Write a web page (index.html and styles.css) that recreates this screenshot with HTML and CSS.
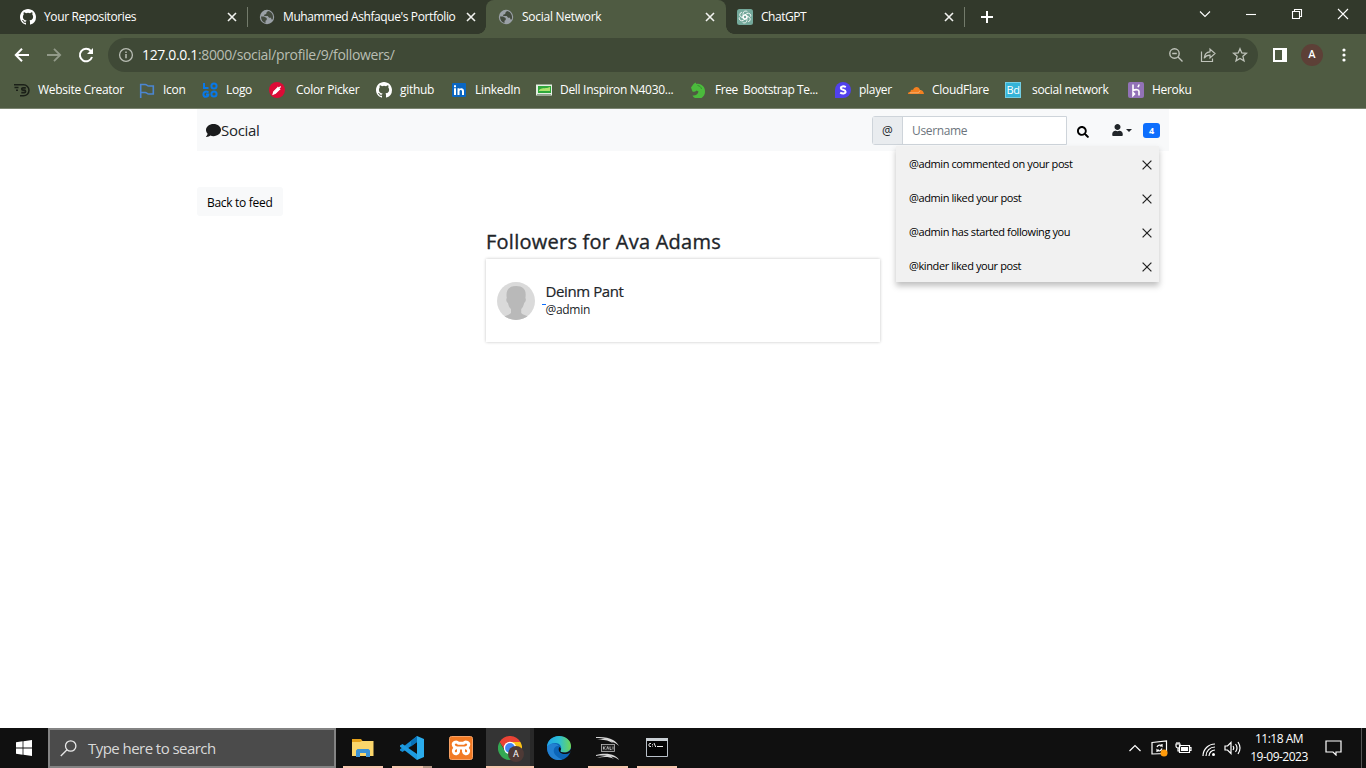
FILE: index.html
```html
<!DOCTYPE html>
<html lang="en">
<head>
<meta charset="utf-8">
<title>Social Network</title>
<link rel="stylesheet" href="styles.css">
</head>
<body>
<svg width="0" height="0" class="defs">
  <symbol id="github" viewBox="0 0 16 16"><path fill="#fff" d="M8 0C3.58 0 0 3.58 0 8c0 3.54 2.29 6.53 5.47 7.59.4.07.55-.17.55-.38 0-.19-.01-.82-.01-1.49-2.01.37-2.53-.49-2.69-.94-.09-.23-.48-.94-.82-1.13-.28-.15-.68-.52-.01-.53.63-.01 1.08.58 1.23.82.72 1.21 1.87.87 2.33.66.07-.52.28-.87.51-1.07-1.78-.2-3.64-.89-3.64-3.95 0-.87.31-1.59.82-2.15-.08-.2-.36-1.02.08-2.12 0 0 .67-.21 2.2.82a7.6 7.6 0 0 1 4 0c1.53-1.04 2.2-.82 2.2-.82.44 1.1.16 1.92.08 2.12.51.56.82 1.27.82 2.15 0 3.07-1.87 3.75-3.65 3.95.29.25.54.73.54 1.48 0 1.07-.01 1.93-.01 2.2 0 .21.15.46.55.38A8 8 0 0 0 16 8c0-4.42-3.58-8-8-8z"/></symbol>
  <symbol id="globe" viewBox="0 0 16 16"><circle cx="8" cy="8" r="7.200" fill="#9aa0a6"/><path fill="#434a3e" d="M2 7.500h3l2.700 1.500v2l-1.200.8v2.300C4 13.500 2 11 2 7.500zM9 2l-1.500 1.500-.3 1.500-2 .7v1.400h3.500l1.400 1.600h2.100v1.600l1.500.3C15 6 12.500 2.500 9 2z"/></symbol>
  <symbol id="close" viewBox="0 0 16 16"><path d="M4 4l8 8M12 4l-8 8" stroke="currentColor" stroke-width="1.6" fill="none"/></symbol>
  <symbol id="thin-x" viewBox="0 0 10 10"><path d="M.6.600l8.800 8.800M9.400.600.600 9.400" stroke="currentColor" stroke-width="1.250" fill="none"/></symbol>
</svg>
<header class="browser">
  <div class="tabs">
    <div class="tab tab-first"><svg class="fav"><use href="#github"/></svg><span class="title">Your Repositories</span><svg class="tab-x"><use href="#close"/></svg></div>
    <div class="tab tab-portfolio"><svg class="fav"><use href="#globe"/></svg><span class="title">Muhammed Ashfaque's Portfolio</span><svg class="tab-x"><use href="#close"/></svg></div>
    <div class="tab active"><svg class="fav"><use href="#globe"/></svg><span class="title">Social Network</span><svg class="tab-x"><use href="#close"/></svg></div>
    <div class="tab tab-chat"><svg class="fav" viewBox="0 0 16 16"><rect width="16" height="16" rx="2.500" fill="#74a99b"/><g fill="none" stroke="#fff" stroke-width=".8"><path id="petal" d="M8 5.800 6.100 6.900V4.500a2.500 2.500 0 0 1 4.400-1.600M6.100 6.900v2.200L8 10.200"/><use href="#petal" transform="rotate(60 8 8)"/><use href="#petal" transform="rotate(120 8 8)"/><use href="#petal" transform="rotate(180 8 8)"/><use href="#petal" transform="rotate(240 8 8)"/><use href="#petal" transform="rotate(300 8 8)"/></g></svg><span class="title">ChatGPT</span><svg class="tab-x"><use href="#close"/></svg></div>
    <svg class="new-tab" viewBox="0 0 12 12"><path d="M6 0v12M0 6h12" stroke="#fff" stroke-width="2"/></svg>
    <div class="window-controls">
      <svg width="12" height="12" viewBox="0 0 12 12"><path d="M1 3.500l5 5 5-5"/></svg>
      <svg width="12" height="12" viewBox="0 0 12 12"><path d="M1 6.500h10"/></svg>
      <svg width="12" height="12" viewBox="0 0 12 12"><path d="M1.500 3.500h7v7h-7zM3.500 3.500v-2h7v7h-2"/></svg>
      <svg width="12" height="12" viewBox="0 0 12 12"><path d="M1 1l10 10M11 1 1 11"/></svg>
    </div>
  </div>
  <div class="toolbar">
    <svg class="nav-icon" viewBox="0 0 16 16"><path d="M15 8H2M8 1.800 1.800 8 8 14.200" stroke="#fff" stroke-width="2" fill="none"/></svg>
    <svg class="nav-icon" viewBox="0 0 16 16"><path d="M1 8h13M8 1.800 14.200 8 8 14.200" stroke="#929a89" stroke-width="1.800" fill="none"/></svg>
    <svg class="nav-icon" viewBox="0 0 16 16"><path d="M14 10A6.200 6.200 0 1 1 12.800 4" stroke="#fff" stroke-width="2" fill="none"/><path d="M15 1v6H9z" fill="#fff"/></svg>
    <div class="omnibox">
      <svg width="16" height="16" viewBox="0 0 16 16"><circle cx="8" cy="8" r="6.400" fill="none" stroke="#b9bdb4" stroke-width="1.300"/><path d="M8 7v4.300M8 4.400v1.500" stroke="#b9bdb4" stroke-width="1.500"/></svg>
      <span class="url"><b>127.0.0.1</b>:8000/social/profile/9/followers/</span>
      <div class="omni-actions">
        <svg width="16" height="16" viewBox="0 0 16 16"><g fill="none" stroke="#bfc3ba" stroke-width="1.400"><circle cx="6.500" cy="6.500" r="4.700"/><path d="M4.200 6.500h4.600M10 10l4.500 4.500"/></g></svg>
        <svg width="16" height="16" viewBox="0 0 16 16"><g fill="none" stroke="#bfc3ba" stroke-width="1.200"><path d="M1.500 4.500v10h11v-3"/><path d="M4.200 11.200C4.500 7.500 6.500 5 10 4.800V2l5 4.500-5 4.500V8.200C7.500 8.200 5.600 9 4.200 11.200z"/></g></svg>
        <svg width="16" height="16" viewBox="0 0 16 16"><path fill="none" stroke="#bfc3ba" stroke-width="1.300" d="M8 1.700l1.800 4.200 4.600.4-3.500 3 1.100 4.500L8 11.400l-4 2.400 1.100-4.500-3.500-3 4.600-.4z"/></svg>
      </div>
    </div>
    <svg class="side-panel" viewBox="0 0 14 14"><path fill="#fff" d="M0 0h14v14H0zM2 2v10h7V2z" fill-rule="evenodd"/></svg>
    <span class="profile">A</span>
    <svg class="dots" viewBox="0 0 4 14"><g fill="#fff"><circle cx="2" cy="2" r="1.600"/><circle cx="2" cy="7" r="1.600"/><circle cx="2" cy="12" r="1.600"/></g></svg>
  </div>
  <nav class="bookmarks">
    <a><svg viewBox="0 0 16 16"><g fill="none" stroke="#1b2018" stroke-width="1.500"><path d="M0 2.800h9.500a5.500 5.500 0 0 1 0 11H6M.5 5.500h4M2 8.200h2"/><path d="M11.800 5.800H9a1.200 1.200 0 0 0 0 2.400h1.300a1.200 1.200 0 0 1 0 2.500H7.300" stroke-width="1.700"/></g></svg><span>Website Creator</span></a>
    <a><svg viewBox="0 0 16 16"><path d="M1.700 16V2.500h4.500c1.800 0 1.800 1.500 3.500 1.500h4.600v8h-4.600c-1.700 0-1.700-1.500-3.500-1.500H1.700" fill="none" stroke="#4b86d2" stroke-width="1.600"/></svg><span>Icon</span></a>
    <a><svg viewBox="0 0 16 16"><g fill="none" stroke="#0878e8" stroke-width="2"><path d="M2 1v5h4.500"/><circle cx="12" cy="4" r="2.600"/><path d="M6.500 10.500C4 8.500 1.400 10 1.400 12.200c0 3.500 5 3.500 5 .3H4"/><circle cx="12" cy="12" r="2.600"/></g></svg><span>Logo</span></a>
    <a class="wide"><svg viewBox="0 0 16 16"><circle cx="8" cy="8" r="8" fill="#dc0b36"/><path d="M4 12.300l.7-2.600 4.200-4.200 1.700 1.700-4.200 4.200zM8.500 5l2.700 2.700M9.700 6.500l2-2" stroke="#fff" stroke-width="1.100" fill="#fff"/></svg><span>Color Picker</span></a>
    <a><svg><use href="#github"/></svg><span>github</span></a>
    <a><svg viewBox="0 0 16 16"><rect x="1" y="1" width="14" height="14" rx="1" fill="#0a66c2"/><path fill="#fff" d="M3 6.200h2V13H3zM3 3.200h2v2H3zM6.500 6.200h2v1c1-1.600 4.500-1.600 4.500 1.700V13h-2V9.500c0-2-2.500-2-2.500 0V13h-2z"/></svg><span>LinkedIn</span></a>
    <a><svg viewBox="0 0 16 16"><path fill="#e5eee2" d="M0 2.500h16v11H0z"/><path fill="#2fa83c" d="M2 4h13v7H2z"/><path fill="#aee26d" d="M3 8c4-3 7-1 11-3v4H3z"/><path fill="#94a292" d="M1 12h14v1H1z"/></svg><span>Dell Inspiron N4030...</span></a>
    <a><svg viewBox="0 0 16 16"><path fill="#4bbb3c" d="M0 5.500 2.500 2 4.500.500l1 1.500C10 1 14.500 5 14 10c0 2.500-1.500 4.500-3.500 6H4c-1.300-.6-2-1.500-2.500-2.500 3 .5 5.300-1 6-4L5.500 8.500C4.500 9.700 3 10 1.500 9.500z"/><path d="M6.500 3.500C9 4 10 5 10.500 7" fill="none" stroke="#35922f"/></svg><span>Free&nbsp; Bootstrap Te...</span></a>
    <a><svg viewBox="0 0 16 16"><path d="M0 16V8a8 8 0 1 1 8 8z" fill="#5141ed"/><path d="M10.800 5.100C8.600 3.800 5.800 4.300 5.800 6c0 2.300 4.800 1.300 4.800 3.800 0 2-3.300 2.100-5.400.8" stroke="#fff" stroke-width="2" fill="none"/></svg><span>player</span></a>
    <a><svg viewBox="0 0 16 16"><path fill="#f38020" d="M0 12c.1-1.500 1-2.300 2.500-2.300C2.500 8 3.800 7.500 5 8c1-3.800 6-4.500 7 0 2.300 0 3.500 1.400 4 4z"/><path d="M2 10.800h8.500l1.500-2.300" fill="none" stroke="#f9c18e" stroke-width=".7"/></svg><span>CloudFlare</span></a>
    <a class="wide"><span class="bd">Bd</span><span>social network</span></a>
    <a><svg viewBox="0 0 16 16"><rect width="16" height="16" rx="2" fill="#9272b7"/><path d="M5 2.500v6c3-1.500 6-1 6 1v4M5 10.500v3l1.500-1.500zM11 2.500c0 1-.5 2-1.300 2.500" fill="none" stroke="#fff" stroke-width="1.600"/></svg><span>Heroku</span></a>
  </nav>
</header>
<main class="page">
  <nav class="navbar">
    <a class="brand"><svg width="15" height="15" viewBox="0 0 512 512"><path fill="#1b1c1d" d="M256 32C114.600 32 0 125.100 0 240c0 49.600 21.400 95 57 130.700C44.500 421.100 2.700 466 2.200 466.500c-2.200 2.300-2.800 5.700-1.500 8.700S4.800 480 8 480c66.300 0 116-31.800 140.600-51.400 32.700 12.300 69 19.400 107.400 19.400 141.400 0 256-93.100 256-208S397.400 32 256 32z"/></svg><span>Social</span></a>
    <div class="nav-tools">
      <div class="search"><span class="at">@</span><span class="field">Username</span></div>
      <svg class="find" viewBox="0 0 512 512"><path d="M505 442.700L405.300 343c-4.500-4.500-10.600-7-17-7H372c27.600-35.300 44-79.700 44-128C416 93.100 322.900 0 208 0S0 93.100 0 208s93.100 208 208 208c48.300 0 92.700-16.400 128-44v16.300c0 6.400 2.500 12.500 7 17l99.700 99.700c9.400 9.400 24.600 9.400 33.900 0l28.300-28.300c9.400-9.400 9.400-24.600.1-34zM208 336c-70.700 0-128-57.200-128-128 0-70.700 57.200-128 128-128 70.700 0 128 57.200 128 128 0 70.700-57.200 128-128 128z"/></svg>
      <svg class="user" viewBox="0 0 448 512"><path fill="#212529" d="M224 256c70.700 0 128-57.300 128-128S294.700 0 224 0 96 57.300 96 128s57.300 128 128 128zm89.600 32h-16.700c-22.200 10.200-46.900 16-72.900 16s-50.600-5.800-72.900-16h-16.700C60.200 288 0 348.200 0 422.400V464c0 26.500 21.500 48 48 48h352c26.500 0 48-21.500 48-48v-41.600c0-74.200-60.200-134.400-134.400-134.400z"/></svg>
      <i class="caret"></i>
      <div class="notify"><span class="badge">4</span>
        <ul class="menu">
          <li><span>@admin commented on your post</span><svg><use href="#thin-x"/></svg></li>
          <li><span>@admin liked your post</span><svg><use href="#thin-x"/></svg></li>
          <li><span>@admin has started following you</span><svg><use href="#thin-x"/></svg></li>
          <li><span>@kinder liked your post</span><svg><use href="#thin-x"/></svg></li>
        </ul>
      </div>
    </div>
  </nav>
  <a class="back"><span>Back to feed</span></a>
  <section class="followers">
    <h1><span>Followers for Ava Adams</span></h1>
    <article class="card">
      <svg class="avatar" viewBox="0 0 38 38"><defs><clipPath id="round"><circle cx="19" cy="19" r="19"/></clipPath></defs><g clip-path="url(#round)"><path fill="#dadada" d="M0 0h38v38H0z"/><path fill="#b9b9b9" d="M19 4c6.500 0 9.700 3 9.700 8.500 0 1.500-.2 2.500-.3 3.500 1 1.500.2 4-1.200 5-.7 3-1.700 4.700-3 6v4c1.500 2 5 2.300 8 4L29 39H9l-3-4c3-1.700 6.500-2 8-4v-4c-1.500-1.300-2.500-3-3-6-1.500-1-2.300-3.500-1.200-5C8.500 8.500 11.500 4 19 4z"/></g></svg>
      <i class="link-mark"></i>
      <div class="person"><span class="name">Deinm Pant</span><span class="handle">@admin</span></div>
    </article>
  </section>
</main>
<footer class="taskbar">
  <div class="start"><svg width="16" height="16" viewBox="0 0 16 16"><path fill="#fff" d="M0 2.300 6.600 1.300v6.200H0zM7.400 1.200 16 0v7.500H7.400zM0 8.400h6.600v6.300L0 13.700zM7.400 8.400H16V16l-8.600-1.200z"/></svg></div>
  <div class="task-search"><svg width="17" height="17" viewBox="0 0 17 17"><g fill="none" stroke="#e8e8e8" stroke-width="1.300"><circle cx="10.700" cy="6" r="5.200"/><path d="M7 9.700.800 16"/></g></svg><span>Type here to search</span></div>
  <div class="apps">
    <div class="app open"><svg viewBox="0 0 24 24"><path fill="#e5a11a" d="M1 3h9l1.500 2H22v3H1z"/><path fill="#fbd66b" d="M1 6h8l2-1h11.500v15H1z"/><path fill="#3b92d5" d="M5 21v-6.500L6.500 13h11l1.500 1.500V21h-4v-4H9v4z"/></svg></div>
    <div class="app open split"><svg viewBox="0 0 24 24"><path fill="#168bd1" d="M17 0v6L2.500 16 0 14.500v-1.200z"/><path fill="#1e9be0" d="M17 24v-6L2.500 8 0 9.500v1.200z"/><path fill="#0871b8" d="M11 5.500 17 0v6l-6 4.500z"/><path fill="#2bacec" d="M17 0l7 3v18l-7 3z"/></svg></div>
    <div class="app"><svg viewBox="0 0 24 24"><rect x=".5" y=".5" width="23" height="23" rx="2" fill="#f27a24" stroke="#f7a164"/><g fill="none" stroke="#fff" stroke-width="3"><path d="M12 7.300H9.500C7 4.500 3.500 7 4.500 9.500c.4 1.300 1.500 2 2.500 2.300-2.500 1-3.200 3-2.200 4.800 1.200 2 4.200 1.500 4.700-1V12h5v3.600c.5 2.500 3.500 3 4.700 1 1-1.800.3-3.800-2.200-4.800 1-.3 2.100-1 2.500-2.300 1-2.500-2.500-5-5-2.200z"/></g></svg></div>
    <div class="app open current"><svg viewBox="0 0 24 24"><path fill="#e94335" d="M1.600 6A12 12 0 0 1 22.400 6H12l-5 8z"/><path fill="#fbc116" d="M12 6h10.400A12 12 0 0 1 12 24l5.200-9z"/><path fill="#34a853" d="M1.600 6A12 12 0 0 0 12 24l5.200-9H6.800z"/><circle cx="12" cy="12" r="6.200" fill="#fff"/><circle cx="12" cy="12" r="4.900" fill="#4285f4"/></svg><span class="chrome-user">A</span></div>
    <div class="app"><svg viewBox="0 0 24 24"><defs><linearGradient id="eg" x1="0" x2="1"><stop stop-color="#20a5e8"/><stop offset=".5" stop-color="#2cbfd5"/><stop offset="1" stop-color="#6fd654"/></linearGradient></defs><circle cx="12" cy="12" r="12" fill="#0c65b8"/><path fill="url(#eg)" d="M0 11C0 5 5 0 12 0s12 4.500 12 10c0 4-3 6.500-7 6.500-3.200 0-4-1-3.500-2 2-2.500 0-7.500-5-7.500-3.500 0-7 2-8.500 4z"/><path fill="#2380d1" d="M0 11c2-4 9-5 12-1-5-1-7 5-3.500 9 2 2.400 4 3.500 7 4.500C7 26 0 20 0 11z"/><path fill="#111" d="M12.500 11c-2 2-.5 7 5 7 2.300 0 4-.7 5.500-1.600l1.500-2V12c-2 4-5 4.500-7.500 4.500-3.200 0-4-1-3.500-2 .8-1.200.500-2.700-1-3.500z"/></svg></div>
    <div class="app open"><svg viewBox="0 0 24 24"><path d="M0 1c7-.5 13 .5 17 3 3 1.500 4.500 3.500 6 6-3-2.500-5-3.700-8-4.500 1 .7 2 1.300 2.500 2C12 4 7 3.500 1 4c4-1 7-1 9-.8C7 2.300 4 2 0 2zM0 19c7-2 14-1.500 18 .5 2.500 1.200 4 2.500 5 4.500-3-2.500-5-3-8-3.500L18 23c-5-2.500-10-2.500-17-1 4-1.500 7-2 10-2-4-.7-7-.5-11 0z" fill="#d7d7d7"/><rect x="5.500" y="8.500" width="13" height="7" fill="#202020" stroke="#bbb" stroke-width=".8"/><path d="M7.500 10.500v3M9.500 10.500l-2 1.500 2 1.500M10.700 13.500l1-3 1 3M14 10.500v3h1.500M17 10.500v3" fill="none" stroke="#ddd" stroke-width=".7"/></svg></div>
    <div class="app open"><svg viewBox="0 0 24 24"><path fill="#050505" stroke="#b9c1c9" stroke-width="1" d="M1.500 2.500h21v18h-21z"/><path fill="#cad0d5" d="M1 2h22v3H1z"/><path d="M6 7.500H4.500L4 8v2l.5.500H6M7.500 8v.8M7.500 9.700v.8M9 7l1.700 4M12 10.500h6" stroke="#eee" fill="none"/></svg></div>
  </div>
  <div class="tray">
    <svg class="up" viewBox="0 0 12 8"><path d="M.5 7 6 1.500 11.500 7"/></svg>
    <svg class="sync" viewBox="0 0 17 17"><path d="M1 2.500 15.500 1v12.500L1 14zM6 7a3 3 0 0 1 5-1V4M11 6H9M11 8.500a3 3 0 0 1-5 1.500v2M6 10h2"/><circle cx="13" cy="13" r="3.500" fill="#ff9b0b"/></svg>
    <svg class="battery" viewBox="0 0 17 12"><path d="M4.500 3.500h10v7h-10zM15 5.500h1v3h-1M1 2h4v2a2 2 0 0 1-4 0zM2 2V0M4 2V0M3 6v3h2"/><rect fill="#fff" x="6" y="5" width="7" height="4"/></svg>
    <svg class="wifi" viewBox="0 0 14 14"><path d="M1 13A12 12 0 0 1 13 1M4 13a9 9 0 0 1 9-9M7 13a6 6 0 0 1 6-6"/><circle cx="11.500" cy="11.500" r="1.500" fill="#fff"/></svg>
    <svg class="sound" viewBox="0 0 17 14"><path d="M1 5h2.500L7 1.500v11L3.500 9H1zM9 5q1.500 2 0 4M11.500 3q3 4 0 8M14 1q4 6 0 12"/></svg>
    <div class="clock"><span class="time">11:18 AM</span><span class="date">19-09-2023</span></div>
    <svg class="chat" viewBox="0 0 17 16"><path d="M1 1h15v11h-5v3l-3-3H1z"/></svg>
    <i class="desktop"></i>
  </div>
</footer>
</body>
</html>
```
FILE: styles.css
```css
* { box-sizing: border-box; }
body { margin: 0; width: 1366px; height: 768px; overflow: hidden; display: flex; flex-direction: column; background: #fff; font-family: "Open Sans", "Noto Sans", sans-serif; color: #212529; }
svg { display: block; flex: none; }
span { white-space: nowrap; }
.defs { position: absolute; }

.browser { height: 109px; flex: none; background: #4f5b42; border-bottom: 1px solid #7b8471; color: #fff; }
.tabs { height: 34px; background: #32392b; display: flex; }
.tab { width: 238px; height: 34px; padding: 0 7px 0 11px; display: flex; align-items: center; position: relative; font-size: 12px; letter-spacing: -.4px; }
.tab-first { width: 248px; padding: 0 8px 0 20px; letter-spacing: -.38px; }
.tab-first::after, .tab-chat::after { content: ""; position: absolute; right: 0; top: 7px; width: 1px; height: 20px; background: #737b6b; }
.tab .fav { width: 16px; height: 16px; margin-right: 8px; }
.tab .title { flex: 1; padding-bottom: 1px; }
.tab-x { width: 16px; height: 16px; color: #f2f3f0; }
.active { width: 240px; padding: 0 8px 0 12px; background: #4f5b42; border-radius: 8px 8px 0 0; letter-spacing: -.27px; }
.active::before, .active::after { content: ""; position: absolute; bottom: 0; width: 8px; height: 8px; }
.active::before { left: -8px; background: radial-gradient(circle at 0 0, transparent 7.500px, #4f5b42 8px); }
.active::after { right: -8px; background: radial-gradient(circle at 100% 0, transparent 7.500px, #4f5b42 8px); }
.tab-chat { width: 239px; padding: 0 8px 0 11px; letter-spacing: -.45px; }
.new-tab { width: 12px; height: 12px; margin: 11px 0 0 16px; }
.window-controls { display: flex; gap: 34px; margin: 8px 17px 0 auto; }
.window-controls path { fill: none; stroke: #fff; stroke-width: 1.100; }

.toolbar { height: 42px; display: flex; align-items: center; padding: 0 20px 0 14px; }
.nav-icon { width: 16px; height: 16px; margin-right: 16px; }
.omnibox { width: 1150px; height: 34px; margin-left: -2px; border-radius: 17px; background: #3f4936; display: flex; align-items: center; padding: 0 10px; }
.url { margin-left: 8px; padding-bottom: 1px; font-size: 14px; letter-spacing: -.35px; color: #b9beb3; }
.url b { color: #fff; font-weight: 400; }
.omni-actions { display: flex; gap: 16px; margin-left: auto; }
.side-panel { width: 14px; height: 14px; margin-left: 15px; }
.profile { width: 22px; height: 22px; border-radius: 50%; background: #5d4037; margin-left: 14px; text-align: center; font: 500 11px/22px Roboto, sans-serif; }
.dots { width: 4px; height: 14px; margin-left: 19px; }

.bookmarks { height: 28px; padding-left: 14px; display: grid; grid-template-columns: 125px 63px 67px 107px 75px 85px 155px 144px 73px 97px 123px 90px; align-items: center; font-size: 12px; letter-spacing: -.3px; }
.bookmarks a { display: flex; align-items: center; gap: 8px; }
.bookmarks a > span:last-child { padding-bottom: 1px; }
.bookmarks a:nth-child(8) { letter-spacing: -.45px; }
.bookmarks .wide { gap: 11px; }
.bookmarks svg { width: 16px; height: 16px; }
.bd { width: 16px; height: 16px; background: #34b4d8; font-size: 11px; line-height: 15px; text-align: center; outline: 1px solid #72cde3; outline-offset: -1px; }

.page { flex: 1; width: 972px; margin-left: 197px; }
.navbar { height: 42px; background: #f8f9fa; display: flex; align-items: center; padding: 0 9px; }
.brand { display: flex; align-items: center; font-size: 15px; letter-spacing: -.3px; }
.nav-tools { display: flex; align-items: center; margin-left: auto; }
.search { width: 195px; height: 29px; display: flex; border: 1px solid #ced4da; border-radius: 3px 0 0 3px; font-size: 12px; line-height: 27px; background: #fff; }
.at { width: 30px; text-align: center; background: #e9ecef; border-right: 1px solid #ced4da; }
.field { padding-left: 9px; letter-spacing: -.35px; color: #6c757d; }
.find { width: 12px; height: 12px; margin: 3px 0 0 10px; }
.user { width: 11px; height: 12px; margin-left: 23px; }
.caret { margin-left: 3px; border: 3px solid transparent; border-top-color: #212529; border-bottom: 0; }
.notify { position: relative; margin-left: 11px; }
.badge { display: block; width: 17px; height: 15px; margin-top: 1px; border-radius: 3px; background: #0d6efd; color: #fff; font-size: 9px; font-weight: 700; line-height: 15px; text-align: center; }
.menu { position: absolute; z-index: 1; right: 1px; top: 24px; width: 263px; margin: 0; padding: 0; list-style: none; background: #f1f1f1; box-shadow: 0 4px 6px rgba(0,0,0,.25); font-size: 11px; letter-spacing: -.4px; color: #000; }
.menu li { height: 34px; display: flex; justify-content: space-between; align-items: center; padding: 0 7px 0 13px; }
.menu svg { width: 10px; height: 10px; margin-top: 3px; color: #222; }
.back { display: block; width: 86px; height: 29px; margin-top: 36px; padding-left: 10px; border-radius: 3px; background: #f8f9fa; font-size: 12px; line-height: 31px; letter-spacing: -.3px; color: #000; }
.followers { width: 394px; margin: 11px 0 0 289px; }
.followers h1 { margin: 0; font-size: 20px; line-height: 30px; font-weight: 400; letter-spacing: .25px; -webkit-text-stroke: .35px #212529; height: 32px; }
.card { height: 83px; display: flex; align-items: center; padding-left: 11px; box-shadow: 0 0 3px rgba(0,0,0,.24); }
.avatar { width: 38px; height: 38px; }
.link-mark { width: 4px; height: 1px; margin: 8px 0 0 7px; background: #0d6efd; }
.person { display: flex; flex-direction: column; margin: -1px 0 0 -.5px; }
.name { font-size: 15px; line-height: 19px; letter-spacing: -.4px; -webkit-text-stroke: .2px #212529; }
.handle { font-size: 12px; line-height: 17px; letter-spacing: -.3px; }

.taskbar { height: 40px; background: #101010; display: flex; color: #fff; }
.start { width: 48px; display: flex; justify-content: center; align-items: center; }
.task-search { width: 288px; border: 2px solid #838383; background: #4b4b4b; color: #d9d9d9; display: flex; align-items: center; gap: 11px; padding-left: 10px; font-size: 15px; letter-spacing: -.55px; }
.apps { display: flex; gap: 5px; padding-left: 5px; }
.app { width: 44px; position: relative; display: flex; justify-content: center; align-items: center; }
.app svg { width: 24px; height: 24px; }
.app:last-child svg { margin-left: -1px; }
.open::after { content: ""; position: absolute; left: 2px; right: 2px; bottom: 0; height: 2px; background: #f5c6ad; }
.split::after { background: linear-gradient(90deg, #f5c6ad 31px, #b39583 31px); }
.current { width: 48px; margin: 0 -2px; background: linear-gradient(90deg, #343434 44px, #292929 44px); }
.current::after { left: 0; right: 0; }
.chrome-user { position: absolute; left: 22px; top: 18px; width: 16px; height: 16px; border-radius: 50%; background: #4e3a36; font: 9px/16px Roboto, sans-serif; text-align: center; }
.tray { display: flex; align-items: center; margin-left: auto; }
.tray path { fill: none; stroke: #fff; stroke-width: 1.200; }
.up { width: 12px; height: 8px; }
.sync { width: 17px; height: 17px; margin-left: 10px; }
.battery { width: 17px; height: 12px; margin-left: 7px; }
.wifi { width: 14px; height: 14px; margin: 3px 0 0 10px; }
.sound { width: 17px; height: 14px; margin-left: 8px; }
.clock { width: 60px; margin-left: 8px; font-size: 12px; line-height: 18px; letter-spacing: -.5px; display: flex; flex-direction: column; align-items: center; }
.time { letter-spacing: -.9px; letter-spacing: -.5px; }
.chat { width: 17px; height: 16px; margin-left: 16px; }
.desktop { width: 1px; height: 40px; margin: 0 4px 0 19px; background: #555; }
```
